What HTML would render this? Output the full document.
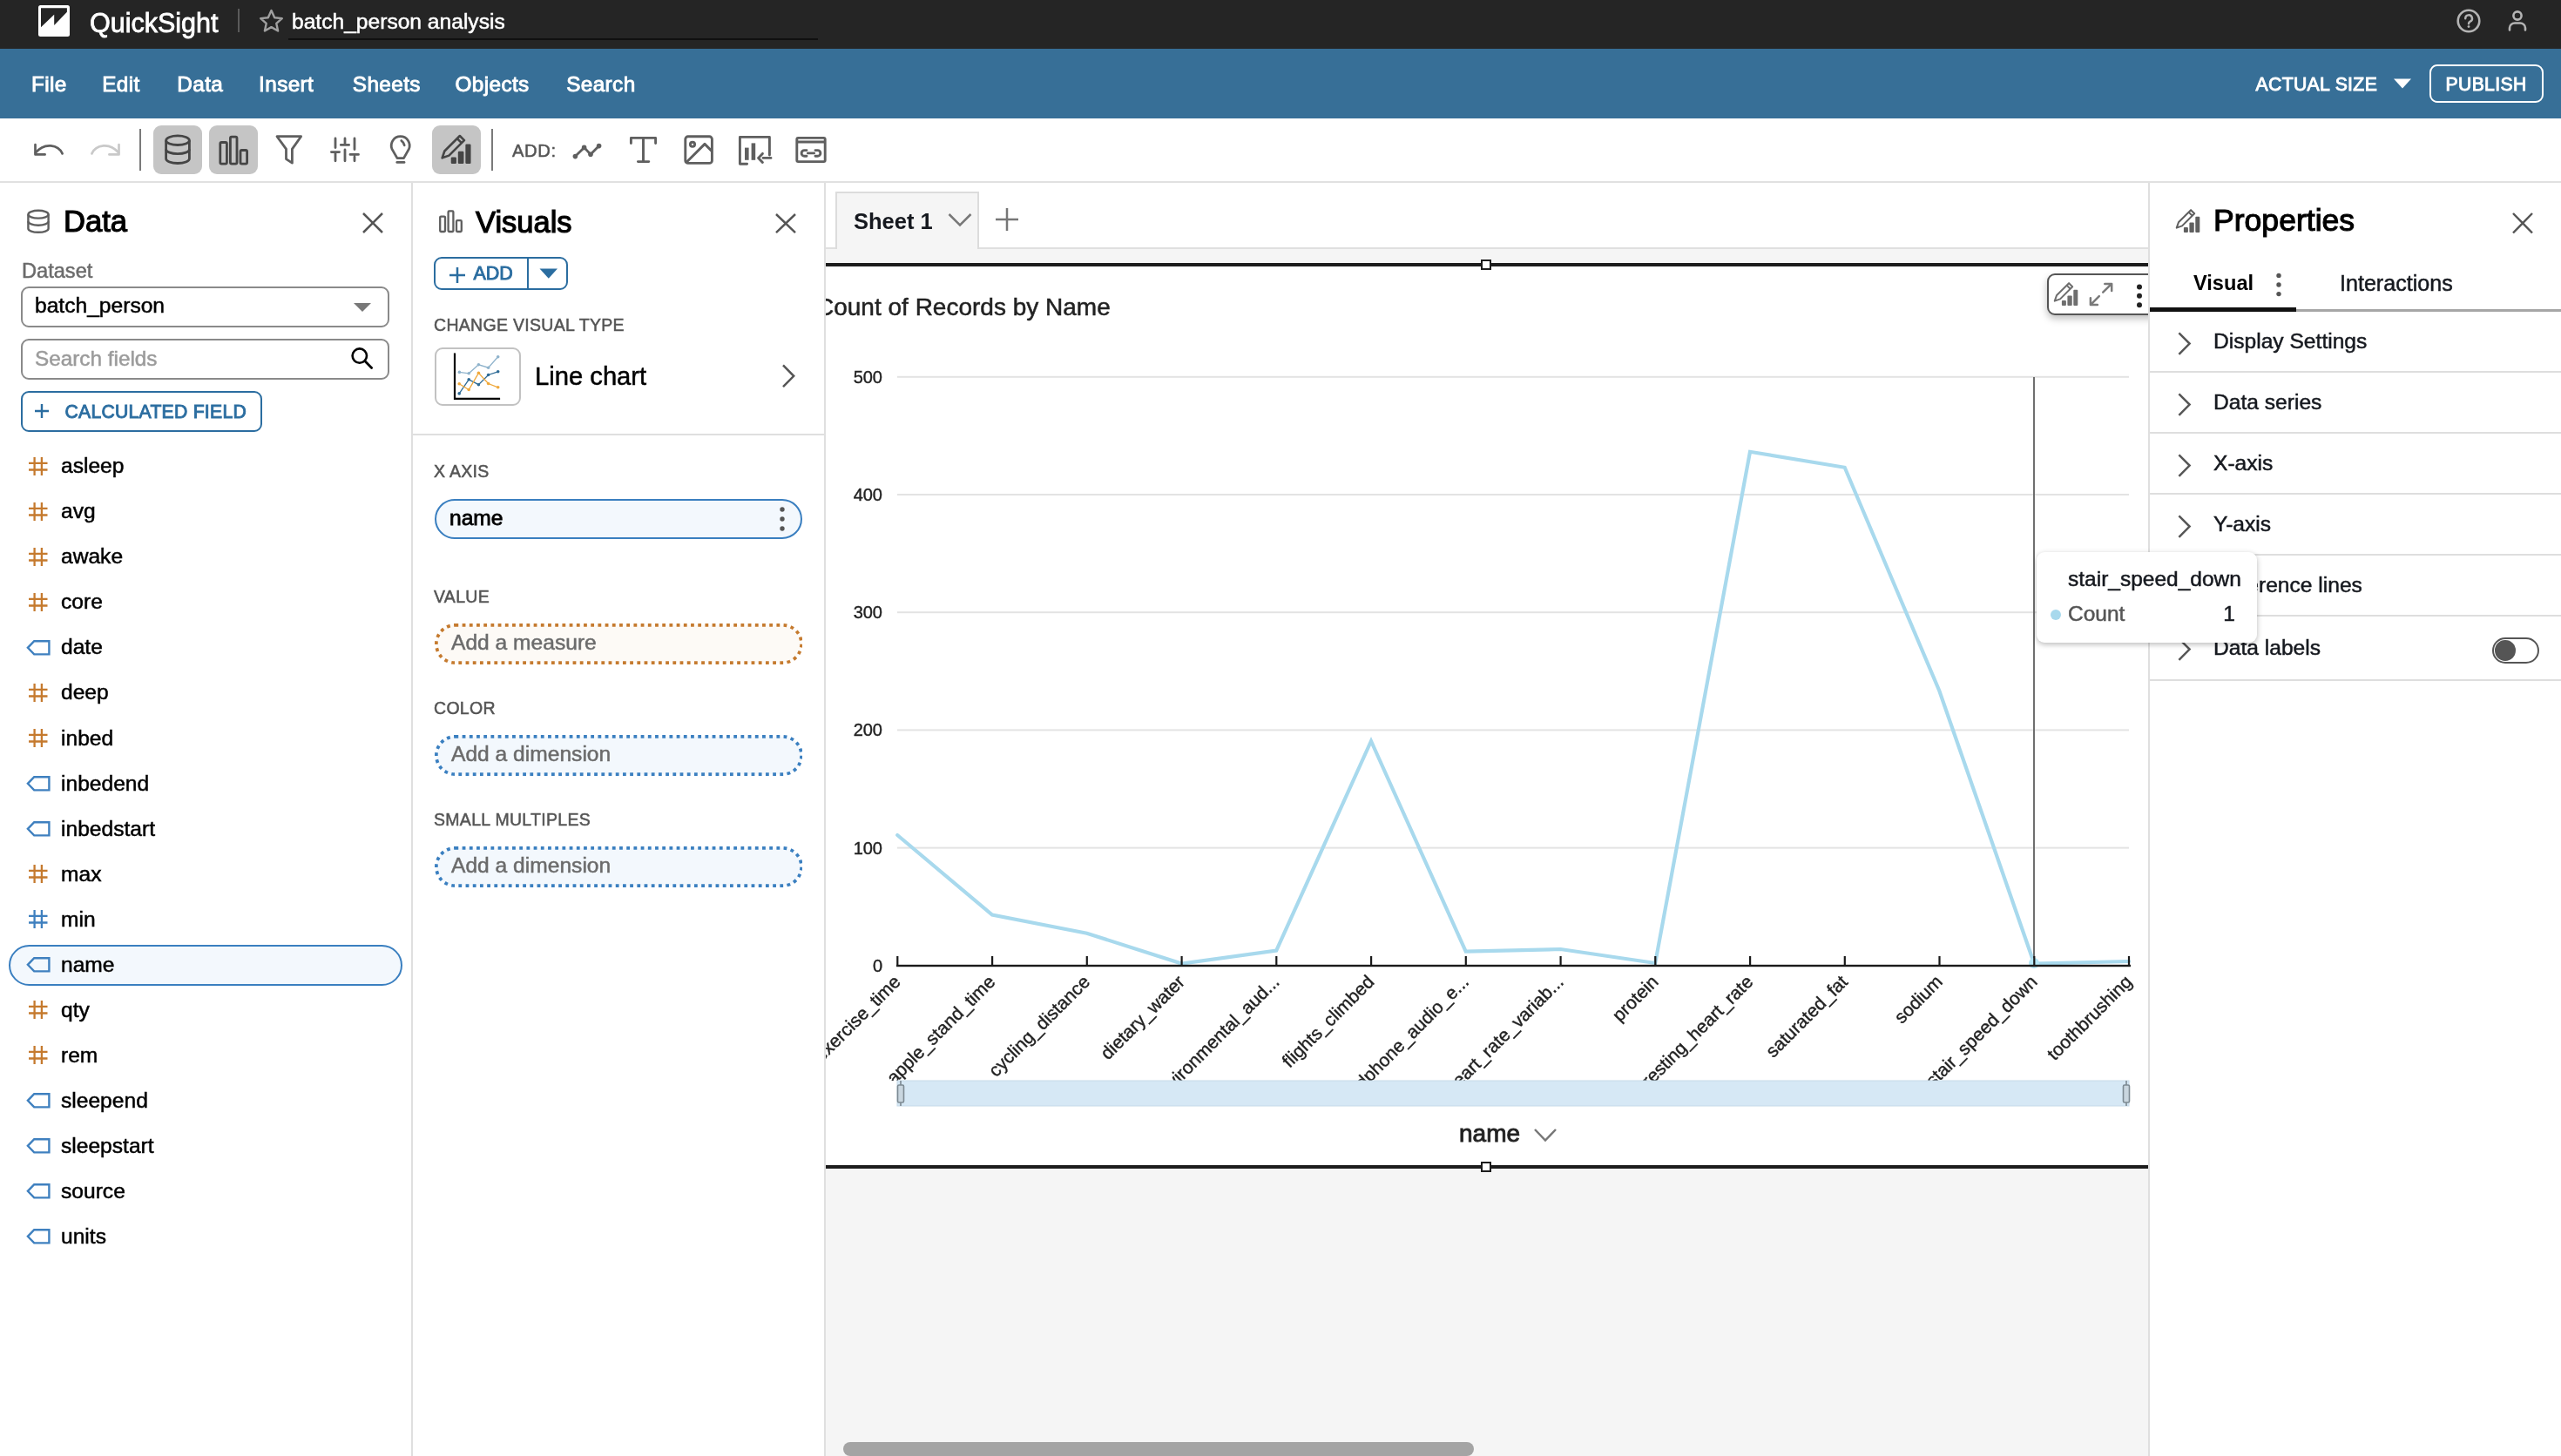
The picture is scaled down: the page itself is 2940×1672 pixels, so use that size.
<!DOCTYPE html>
<html><head><meta charset="utf-8"><title>QuickSight</title>
<style>
html,body{margin:0;padding:0;width:2940px;height:1672px;overflow:hidden;background:#fff;}
body{position:relative;font-family:"Liberation Sans",sans-serif;}
.t{position:absolute;white-space:nowrap;-webkit-text-stroke:0.5px currentColor;}
.t.b{-webkit-text-stroke:0;}
body{will-change:transform;}
.r{position:absolute;display:block;}
</style></head><body>
<div class="r" style="left:0.0px;top:0.0px;width:2940.0px;height:56.0px;background:#252525"></div>
<svg class="r" style="left:44px;top:6px;" width="36" height="36" viewBox="0 0 36 36"><rect x="0" y="0" width="36" height="36" rx="2.5" fill="#fff"/><path d="M3 3.2 H32.9 V7.7 L18.2 22.9 V10.8 L3 25.2 Z" fill="#252525"/></svg>
<div class="t" style="left:103.0px;top:10.9px;font-size:30.5px;line-height:30.5px;font-weight:400;color:#ffffff;-webkit-text-stroke:0.8px #fff">QuickSight</div>
<div class="r" style="left:273.0px;top:10.0px;width:2.0px;height:27.0px;background:#5a5a5a"></div>
<svg class="r" style="left:296px;top:9px;" width="32" height="30" viewBox="0 0 32 30"><path d="M15.5 3 L19.2 11.2 L27.8 12.1 L21.3 17.9 L23.1 26.5 L15.5 22.1 L7.9 26.5 L9.7 17.9 L3.2 12.1 L11.8 11.2 Z" fill="none" stroke="#a0a0a0" stroke-width="2.4" stroke-linejoin="round"/></svg>
<div class="t" style="left:335.0px;top:13.2px;font-size:24.6px;line-height:24.6px;font-weight:400;color:#ffffff;">batch_person analysis</div>
<div class="r" style="left:331.0px;top:44.0px;width:608.0px;height:2.0px;background:#101010"></div>
<svg class="r" style="left:2818px;top:8px;" width="32" height="32" viewBox="0 0 32 32"><circle cx="16" cy="16" r="12.3" fill="none" stroke="#b4b4b4" stroke-width="2.6"/><path d="M12.2 13.2 a3.9 3.9 0 1 1 5.6 3.5 c-1.2 .6 -1.8 1.3 -1.8 2.6" fill="none" stroke="#b4b4b4" stroke-width="2.4" stroke-linecap="round"/><circle cx="16" cy="22.6" r="1.4" fill="#b4b4b4"/></svg>
<svg class="r" style="left:2876px;top:10px;" width="28" height="28" viewBox="0 0 28 28"><circle cx="14" cy="8" r="4.6" fill="none" stroke="#b4b4b4" stroke-width="2.6"/><path d="M5 24.5 V22 a6 5.5 0 0 1 6 -5.5 H17 a6 5.5 0 0 1 6 5.5 V24.5" fill="none" stroke="#b4b4b4" stroke-width="2.6" stroke-linecap="round"/></svg>
<div class="r" style="left:0.0px;top:56.0px;width:2940.0px;height:80.0px;background:#376f97"></div>
<div class="t" style="left:36.0px;top:84.7px;font-size:24.3px;line-height:24.3px;font-weight:400;color:#ffffff;letter-spacing:0.4px;-webkit-text-stroke:0.9px #fff">File</div>
<div class="t" style="left:117.2px;top:84.7px;font-size:24.3px;line-height:24.3px;font-weight:400;color:#ffffff;letter-spacing:0.4px;-webkit-text-stroke:0.9px #fff">Edit</div>
<div class="t" style="left:203.3px;top:84.7px;font-size:24.3px;line-height:24.3px;font-weight:400;color:#ffffff;letter-spacing:0.4px;-webkit-text-stroke:0.9px #fff">Data</div>
<div class="t" style="left:297.1px;top:84.7px;font-size:24.3px;line-height:24.3px;font-weight:400;color:#ffffff;letter-spacing:0.4px;-webkit-text-stroke:0.9px #fff">Insert</div>
<div class="t" style="left:404.8px;top:84.7px;font-size:24.3px;line-height:24.3px;font-weight:400;color:#ffffff;letter-spacing:0.4px;-webkit-text-stroke:0.9px #fff">Sheets</div>
<div class="t" style="left:522.5px;top:84.7px;font-size:24.3px;line-height:24.3px;font-weight:400;color:#ffffff;letter-spacing:0.4px;-webkit-text-stroke:0.9px #fff">Objects</div>
<div class="t" style="left:650.2px;top:84.7px;font-size:24.3px;line-height:24.3px;font-weight:400;color:#ffffff;letter-spacing:0.4px;-webkit-text-stroke:0.9px #fff">Search</div>
<div class="t" style="left:2589.5px;top:86.0px;font-size:21.2px;line-height:21.2px;font-weight:400;color:#ffffff;letter-spacing:0.35px;-webkit-text-stroke:0.9px #fff">ACTUAL SIZE</div>
<svg class="r" style="left:2746px;top:89px;" width="24" height="14" viewBox="0 0 24 14"><path d="M2 1.5 H22 L12 12.5 Z" fill="#fff"/></svg>
<div class="r" style="left:2789.0px;top:74.0px;width:131.0px;height:43.5px;border:2.4px solid #fff;border-radius:9px;box-sizing:border-box"></div>
<div class="t" style="left:2807.5px;top:86.0px;font-size:21.2px;line-height:21.2px;font-weight:400;color:#ffffff;letter-spacing:0.35px;-webkit-text-stroke:0.9px #fff">PUBLISH</div>
<div class="r" style="left:0.0px;top:136.0px;width:2940.0px;height:72.0px;background:#fff"></div>
<div class="r" style="left:0.0px;top:208.0px;width:2940.0px;height:2.0px;background:#e1e1e1"></div>
<svg class="r" style="left:34px;top:158px;" width="44" height="26" viewBox="0 0 44 26"><path d="M37.6 18.4 C33 8 17 5 6.8 17.5" fill="none" stroke="#5f5f5f" stroke-width="2.7" stroke-linecap="round"/><path d="M6.5 8.2 V19.4 H17.6" fill="none" stroke="#5f5f5f" stroke-width="2.7" stroke-linecap="round" stroke-linejoin="round"/></svg>
<svg class="r" style="left:99px;top:158px;" width="44" height="26" viewBox="0 0 44 26"><path d="M6.4 18.4 C11 8 27 5 37.2 17.5" fill="none" stroke="#c9c9c9" stroke-width="2.7" stroke-linecap="round"/><path d="M37.5 8.2 V19.4 H26.4" fill="none" stroke="#c9c9c9" stroke-width="2.7" stroke-linecap="round" stroke-linejoin="round"/></svg>
<div class="r" style="left:160.0px;top:148.0px;width:2.0px;height:48.0px;background:#7a7a7a"></div>
<div class="r" style="left:176.0px;top:144.0px;width:56.0px;height:56.0px;background:#c5c5c5;border-radius:9px"></div>
<div class="r" style="left:240.0px;top:144.0px;width:56.0px;height:56.0px;background:#c5c5c5;border-radius:9px"></div>
<div class="r" style="left:496.0px;top:144.0px;width:56.0px;height:56.0px;background:#c5c5c5;border-radius:9px"></div>
<svg class="r" style="left:176px;top:144px;" width="56" height="56" viewBox="0 0 56 56"><g fill="none" stroke="#454545" stroke-width="2.8"><ellipse cx="28" cy="17.2" rx="13.4" ry="5.3"/><path d="M14.6 17.2 V38.2 a13.4 5.3 0 0 0 26.8 0 V17.2"/><path d="M14.6 27.4 a13.4 5.3 0 0 0 26.8 0"/></g></svg>
<svg class="r" style="left:240px;top:144px;" width="56" height="56" viewBox="0 0 56 56"><g fill="none" stroke="#454545" stroke-width="2.8" stroke-linejoin="round"><rect x="12.8" y="19.5" width="7.6" height="24.6" rx="1.5"/><rect x="24.4" y="13.2" width="7.6" height="30.9" rx="1.5"/><rect x="36" y="28.5" width="7.6" height="15.6" rx="1.5"/></g></svg>
<svg class="r" style="left:296px;top:144px;" width="72" height="56" viewBox="0 0 72 56"><path d="M22 12.7 H49.6 L39.4 27.1 V43.2 L32.5 38.6 V27.1 Z" fill="none" stroke="#5f5f5f" stroke-width="2.8" stroke-linejoin="round"/></svg>
<svg class="r" style="left:368px;top:144px;" width="56" height="56" viewBox="0 0 56 56"><g stroke="#5f5f5f" stroke-width="2.8" stroke-linecap="round"><path d="M17 15 V25.5 M17 30.6 V40.8 M12.4 30.6 H21.6"/><path d="M28 15 V20.6 M28 28 V40.8 M23.3 22.4 H32.6"/><path d="M39 15 V27.5 M39 36 V40.8 M34 33.4 H43.5"/></g></svg>
<svg class="r" style="left:432px;top:144px;" width="56" height="56" viewBox="0 0 56 56"><g fill="none" stroke="#5f5f5f" stroke-width="2.8" stroke-linecap="round" stroke-linejoin="round"><path d="M24 37.6 L18.1 27.4 A10.5 10.5 0 1 1 37.3 27.4 L31.5 37.6 Z"/><path d="M23.8 42.4 H32"/><path d="M28.8 17.6 Q31.4 19.4 32.2 22.8"/></g></svg>
<svg class="r" style="left:496px;top:144px;" width="56" height="56" viewBox="0 0 56 56"><g transform="translate(5.74,5.6) scale(1.24)"><g fill="#454545"><rect x="12.9" y="25" width="5" height="6" rx="1"/><rect x="19.4" y="19.4" width="5.35" height="11.6" rx="1"/><rect x="26.3" y="12.8" width="5" height="18.2" rx="1"/></g><path d="M4.75 25.6 L6.94 19.31 L21.08 5.17 L25.18 9.27 L11.04 23.41 Z M18.61 7.64 L22.71 11.74" fill="none" stroke="#454545" stroke-width="2.1" stroke-linejoin="round"/></g></svg>
<div class="r" style="left:564.0px;top:148.0px;width:2.0px;height:48.0px;background:#7a7a7a"></div>
<div class="t" style="left:588.0px;top:162.9px;font-size:20.2px;line-height:20.2px;font-weight:400;color:#555555;letter-spacing:0.6px">ADD:</div>
<svg class="r" style="left:650px;top:150px;" width="48" height="40" viewBox="0 0 48 40"><path d="M10.4 29.6 L20.6 19.4 L28 27.2 L37.6 17.6" fill="none" stroke="#5f5f5f" stroke-width="2.8" stroke-linecap="round" stroke-linejoin="round"/><g fill="#5f5f5f"><circle cx="10.4" cy="29.6" r="2.8"/><circle cx="20.6" cy="19.4" r="2.8"/><circle cx="28" cy="27.2" r="2.8"/><circle cx="37.6" cy="17.6" r="2.8"/></g></svg>
<svg class="r" style="left:712px;top:150px;" width="52" height="44" viewBox="0 0 52 44"><path d="M12.4 14.6 V8.4 H40.6 V14.6 M26.5 8.4 V35.6 M20.4 35.6 H32.8" fill="none" stroke="#5f5f5f" stroke-width="2.9" stroke-linecap="round" stroke-linejoin="round"/></svg>
<svg class="r" style="left:776px;top:148px;" width="52" height="48" viewBox="0 0 52 48"><g fill="none" stroke="#5f5f5f" stroke-width="2.9" stroke-linejoin="round"><rect x="10.8" y="8.8" width="30.6" height="30.6" rx="3"/><circle cx="19" cy="17.8" r="2.6"/><path d="M11.6 38.8 L33 17.4 L41 25.4"/></g></svg>
<svg class="r" style="left:840px;top:148px;" width="54" height="48" viewBox="0 0 54 48"><g fill="none" stroke="#5f5f5f" stroke-width="2.9" stroke-linecap="round" stroke-linejoin="round"><path d="M9.4 29 V40.3 H17.6 M9.4 30 V9.4 H43.4 V30"/><path d="M36 33.4 H45 M30.6 33.4 L35.4 28.4 M30.6 33.4 L35.4 38.4"/></g><g fill="#5f5f5f"><rect x="15" y="21.6" width="4.6" height="14.2"/><rect x="22.6" y="16.4" width="4.6" height="19.4"/></g></svg>
<svg class="r" style="left:904px;top:148px;" width="54" height="48" viewBox="0 0 54 48"><g fill="none" stroke="#5f5f5f" stroke-width="2.9" stroke-linejoin="round"><rect x="10.8" y="10.4" width="32.4" height="27.2" rx="1.5"/><path d="M10.8 15 H43.2"/><path d="M22 24.6 h-2.6 a3.3 3.3 0 0 0 0 6.6 h2.6 M32 24.6 h2.6 a3.3 3.3 0 0 1 0 6.6 h-2.6 M23.4 27.9 H30.6" stroke-linecap="round"/></g></svg>
<div class="r" style="left:0.0px;top:210.0px;width:472.0px;height:1462.0px;background:#fff"></div>
<div class="r" style="left:472.0px;top:210.0px;width:2.0px;height:1462.0px;background:#dfdfdf"></div>
<svg class="r" style="left:28px;top:238px;" width="32" height="32" viewBox="0 0 32 32"><g fill="none" stroke="#5f5f5f" stroke-width="2.4"><ellipse cx="16" cy="8.2" rx="11.6" ry="4.4"/><path d="M4.4 8.2 V24.4 a11.6 4.4 0 0 0 23.2 0 V8.2"/><path d="M4.4 16.3 a11.6 4.4 0 0 0 23.2 0"/></g></svg>
<div class="t" style="left:73.0px;top:237.1px;font-size:34.6px;line-height:34.6px;font-weight:400;color:#000000;-webkit-text-stroke:1.2px #000">Data</div>
<svg class="r" style="left:415px;top:243px;" width="26" height="26" viewBox="0 0 26 26"><path d="M2 2 L24 24 M24 2 L2 24" stroke="#555" stroke-width="2.5" stroke-linecap="butt"/></svg>
<div class="t" style="left:25.0px;top:300.0px;font-size:23.6px;line-height:23.6px;font-weight:400;color:#6b6b6b;">Dataset</div>
<div class="r" style="left:24.0px;top:328.5px;width:423.0px;height:47.0px;border:2.4px solid #8a8a8a;border-radius:9px;box-sizing:border-box;background:#fff"></div>
<div class="t" style="left:40.0px;top:339.2px;font-size:24.6px;line-height:24.6px;font-weight:400;color:#000000;">batch_person</div>
<svg class="r" style="left:404px;top:346px;" width="24" height="14" viewBox="0 0 24 14"><path d="M2 2 H22 L12 12 Z" fill="#787878"/></svg>
<div class="r" style="left:24.0px;top:388.5px;width:423.0px;height:47.0px;border:2.4px solid #8a8a8a;border-radius:9px;box-sizing:border-box;background:#fff"></div>
<div class="t" style="left:40.0px;top:400.4px;font-size:24.3px;line-height:24.3px;font-weight:400;color:#9b9b9b;">Search fields</div>
<svg class="r" style="left:400px;top:396px;" width="32" height="32" viewBox="0 0 32 32"><circle cx="12.8" cy="12.6" r="8.2" fill="none" stroke="#000" stroke-width="2.6"/><path d="M18.8 18.6 L26.6 26.4" stroke="#000" stroke-width="2.8" stroke-linecap="round"/></svg>
<div class="r" style="left:24.0px;top:448.5px;width:277.0px;height:47.0px;border:2.4px solid #2b6da0;border-radius:9px;box-sizing:border-box"></div>
<svg class="r" style="left:38px;top:462px;" width="20" height="20" viewBox="0 0 20 20"><path d="M10 2 V18 M2 10 H18" stroke="#2b6da0" stroke-width="2.4"/></svg>
<div class="t" style="left:74.5px;top:462.4px;font-size:21.2px;line-height:21.2px;font-weight:400;color:#2b6da0;letter-spacing:0.25px;-webkit-text-stroke:0.9px #2b6da0">CALCULATED FIELD</div>
<svg class="r" style="left:30px;top:520px;" width="28" height="28" viewBox="0 0 28 28"><path d="M9.6 5 V26 M17.9 5 V26 M3 11.8 H24.5 M3 19.5 H24.5" stroke="#c57a2e" stroke-width="2.3"/></svg>
<div class="t" style="left:70.0px;top:523.2px;font-size:24.6px;line-height:24.6px;font-weight:400;color:#000000;">asleep</div>
<svg class="r" style="left:30px;top:572px;" width="28" height="28" viewBox="0 0 28 28"><path d="M9.6 5 V26 M17.9 5 V26 M3 11.8 H24.5 M3 19.5 H24.5" stroke="#c57a2e" stroke-width="2.3"/></svg>
<div class="t" style="left:70.0px;top:575.2px;font-size:24.6px;line-height:24.6px;font-weight:400;color:#000000;">avg</div>
<svg class="r" style="left:30px;top:624px;" width="28" height="28" viewBox="0 0 28 28"><path d="M9.6 5 V26 M17.9 5 V26 M3 11.8 H24.5 M3 19.5 H24.5" stroke="#c57a2e" stroke-width="2.3"/></svg>
<div class="t" style="left:70.0px;top:627.3px;font-size:24.6px;line-height:24.6px;font-weight:400;color:#000000;">awake</div>
<svg class="r" style="left:30px;top:676px;" width="28" height="28" viewBox="0 0 28 28"><path d="M9.6 5 V26 M17.9 5 V26 M3 11.8 H24.5 M3 19.5 H24.5" stroke="#c57a2e" stroke-width="2.3"/></svg>
<div class="t" style="left:70.0px;top:679.3px;font-size:24.6px;line-height:24.6px;font-weight:400;color:#000000;">core</div>
<svg class="r" style="left:28px;top:728px;" width="32" height="28" viewBox="0 0 32 28"><path d="M28.4 8.2 H11.2 L3.9 15.8 L11.2 23.4 H28.4 Z" fill="none" stroke="#3f80bf" stroke-width="2.4" stroke-linejoin="miter"/></svg>
<div class="t" style="left:70.0px;top:731.4px;font-size:24.6px;line-height:24.6px;font-weight:400;color:#000000;">date</div>
<svg class="r" style="left:30px;top:780px;" width="28" height="28" viewBox="0 0 28 28"><path d="M9.6 5 V26 M17.9 5 V26 M3 11.8 H24.5 M3 19.5 H24.5" stroke="#c57a2e" stroke-width="2.3"/></svg>
<div class="t" style="left:70.0px;top:783.4px;font-size:24.6px;line-height:24.6px;font-weight:400;color:#000000;">deep</div>
<svg class="r" style="left:30px;top:832px;" width="28" height="28" viewBox="0 0 28 28"><path d="M9.6 5 V26 M17.9 5 V26 M3 11.8 H24.5 M3 19.5 H24.5" stroke="#c57a2e" stroke-width="2.3"/></svg>
<div class="t" style="left:70.0px;top:835.5px;font-size:24.6px;line-height:24.6px;font-weight:400;color:#000000;">inbed</div>
<svg class="r" style="left:28px;top:884px;" width="32" height="28" viewBox="0 0 32 28"><path d="M28.4 8.2 H11.2 L3.9 15.8 L11.2 23.4 H28.4 Z" fill="none" stroke="#3f80bf" stroke-width="2.4" stroke-linejoin="miter"/></svg>
<div class="t" style="left:70.0px;top:887.5px;font-size:24.6px;line-height:24.6px;font-weight:400;color:#000000;">inbedend</div>
<svg class="r" style="left:28px;top:936px;" width="32" height="28" viewBox="0 0 32 28"><path d="M28.4 8.2 H11.2 L3.9 15.8 L11.2 23.4 H28.4 Z" fill="none" stroke="#3f80bf" stroke-width="2.4" stroke-linejoin="miter"/></svg>
<div class="t" style="left:70.0px;top:939.6px;font-size:24.6px;line-height:24.6px;font-weight:400;color:#000000;">inbedstart</div>
<svg class="r" style="left:30px;top:988px;" width="28" height="28" viewBox="0 0 28 28"><path d="M9.6 5 V26 M17.9 5 V26 M3 11.8 H24.5 M3 19.5 H24.5" stroke="#c57a2e" stroke-width="2.3"/></svg>
<div class="t" style="left:70.0px;top:991.6px;font-size:24.6px;line-height:24.6px;font-weight:400;color:#000000;">max</div>
<svg class="r" style="left:30px;top:1040px;" width="28" height="28" viewBox="0 0 28 28"><path d="M9.6 5 V26 M17.9 5 V26 M3 11.8 H24.5 M3 19.5 H24.5" stroke="#3f80bf" stroke-width="2.3"/></svg>
<div class="t" style="left:70.0px;top:1043.7px;font-size:24.6px;line-height:24.6px;font-weight:400;color:#000000;">min</div>
<div class="r" style="left:10.0px;top:1084.5px;width:452.0px;height:47.0px;border:2.4px solid #3a7fc0;border-radius:24px;box-sizing:border-box;background:#f3f8fd"></div>
<svg class="r" style="left:28px;top:1092px;" width="32" height="28" viewBox="0 0 32 28"><path d="M28.4 8.2 H11.2 L3.9 15.8 L11.2 23.4 H28.4 Z" fill="none" stroke="#3f80bf" stroke-width="2.4" stroke-linejoin="miter"/></svg>
<div class="t" style="left:70.0px;top:1095.7px;font-size:24.6px;line-height:24.6px;font-weight:400;color:#000000;">name</div>
<svg class="r" style="left:30px;top:1144px;" width="28" height="28" viewBox="0 0 28 28"><path d="M9.6 5 V26 M17.9 5 V26 M3 11.8 H24.5 M3 19.5 H24.5" stroke="#c57a2e" stroke-width="2.3"/></svg>
<div class="t" style="left:70.0px;top:1147.8px;font-size:24.6px;line-height:24.6px;font-weight:400;color:#000000;">qty</div>
<svg class="r" style="left:30px;top:1196px;" width="28" height="28" viewBox="0 0 28 28"><path d="M9.6 5 V26 M17.9 5 V26 M3 11.8 H24.5 M3 19.5 H24.5" stroke="#c57a2e" stroke-width="2.3"/></svg>
<div class="t" style="left:70.0px;top:1199.8px;font-size:24.6px;line-height:24.6px;font-weight:400;color:#000000;">rem</div>
<svg class="r" style="left:28px;top:1248px;" width="32" height="28" viewBox="0 0 32 28"><path d="M28.4 8.2 H11.2 L3.9 15.8 L11.2 23.4 H28.4 Z" fill="none" stroke="#3f80bf" stroke-width="2.4" stroke-linejoin="miter"/></svg>
<div class="t" style="left:70.0px;top:1251.9px;font-size:24.6px;line-height:24.6px;font-weight:400;color:#000000;">sleepend</div>
<svg class="r" style="left:28px;top:1300px;" width="32" height="28" viewBox="0 0 32 28"><path d="M28.4 8.2 H11.2 L3.9 15.8 L11.2 23.4 H28.4 Z" fill="none" stroke="#3f80bf" stroke-width="2.4" stroke-linejoin="miter"/></svg>
<div class="t" style="left:70.0px;top:1303.9px;font-size:24.6px;line-height:24.6px;font-weight:400;color:#000000;">sleepstart</div>
<svg class="r" style="left:28px;top:1352px;" width="32" height="28" viewBox="0 0 32 28"><path d="M28.4 8.2 H11.2 L3.9 15.8 L11.2 23.4 H28.4 Z" fill="none" stroke="#3f80bf" stroke-width="2.4" stroke-linejoin="miter"/></svg>
<div class="t" style="left:70.0px;top:1356.0px;font-size:24.6px;line-height:24.6px;font-weight:400;color:#000000;">source</div>
<svg class="r" style="left:28px;top:1404px;" width="32" height="28" viewBox="0 0 32 28"><path d="M28.4 8.2 H11.2 L3.9 15.8 L11.2 23.4 H28.4 Z" fill="none" stroke="#3f80bf" stroke-width="2.4" stroke-linejoin="miter"/></svg>
<div class="t" style="left:70.0px;top:1408.0px;font-size:24.6px;line-height:24.6px;font-weight:400;color:#000000;">units</div>
<div class="r" style="left:474.0px;top:210.0px;width:472.0px;height:1462.0px;background:#fff"></div>
<div class="r" style="left:946.0px;top:210.0px;width:2.0px;height:1462.0px;background:#dfdfdf"></div>
<svg class="r" style="left:500px;top:236px;" width="36" height="36" viewBox="0 0 36 36"><g fill="none" stroke="#5f5f5f" stroke-width="2.3"><rect x="5.2" y="12.6" width="5.8" height="17.4" rx="1"/><rect x="14.6" y="6.4" width="5.8" height="23.6" rx="1"/><rect x="24" y="17.2" width="5.8" height="12.8" rx="1"/></g></svg>
<div class="t" style="left:546.0px;top:237.8px;font-size:34.5px;line-height:34.5px;font-weight:400;color:#000000;-webkit-text-stroke:1.2px #000">Visuals</div>
<svg class="r" style="left:889px;top:243.6px;" width="26" height="25" viewBox="0 0 26 25"><path d="M2 2 L24 23.099999999999994 M24 2 L2 23.099999999999994" stroke="#555" stroke-width="2.5" stroke-linecap="butt"/></svg>
<div class="r" style="left:498.4px;top:294.8px;width:153.9px;height:38.7px;border:2.4px solid #2b6da0;border-radius:9px;box-sizing:border-box"></div>
<div class="r" style="left:604.6px;top:294.8px;width:2.4px;height:38.7px;background:#2b6da0"></div>
<svg class="r" style="left:514px;top:305px;" width="22" height="22" viewBox="0 0 22 22"><path d="M11 2 V20 M2 11 H20" stroke="#2b6da0" stroke-width="2.5"/></svg>
<div class="t" style="left:543.5px;top:303.8px;font-size:21.5px;line-height:21.5px;font-weight:400;color:#2b6da0;-webkit-text-stroke:0.9px #2b6da0">ADD</div>
<svg class="r" style="left:617px;top:306px;" width="26" height="16" viewBox="0 0 26 16"><path d="M2.5 2.4 H23 L12.8 13.8 Z" fill="#2b6da0"/></svg>
<div class="t" style="left:498.0px;top:363.8px;font-size:19.5px;line-height:19.5px;font-weight:400;color:#555555;letter-spacing:0.3px">CHANGE VISUAL TYPE</div>
<div class="r" style="left:498.5px;top:398.5px;width:99.1px;height:67.0px;border:2.4px solid #c2c2c2;border-radius:9px;box-sizing:border-box;background:#fff"></div>
<svg class="r" style="left:496px;top:396px;" width="104" height="72" viewBox="0 0 104 72"><path d="M26 9.6 V61.8 H78.1" fill="none" stroke="#000" stroke-width="2.2"/>
<g fill="none" stroke-width="1.3"><polyline points="31.4,31.4 42.2,32.8 53.4,22.8 64.6,26.2 75.7,13.8" stroke="#8fb3cc"/><polyline points="31.2,55.9 42.2,39.8 53.4,45.7 64.6,34.5 75.7,30.8" stroke="#2e6b96"/><polyline points="31.2,44.8 42.2,51.5 53.4,32.3 64.6,44.5 75.7,48.8" stroke="#f0a93c"/></g>
<g fill="#8fb3cc"><circle cx="31.4" cy="31.4" r="1.8"/><circle cx="42.2" cy="32.8" r="1.8"/><circle cx="53.4" cy="22.8" r="1.8"/><circle cx="64.6" cy="26.2" r="1.8"/><circle cx="75.7" cy="13.8" r="1.8"/></g>
<g fill="#2e6b96"><circle cx="31.2" cy="55.9" r="1.8"/><circle cx="42.2" cy="39.8" r="1.8"/><circle cx="53.4" cy="45.7" r="1.8"/><circle cx="64.6" cy="34.5" r="1.8"/><circle cx="75.7" cy="30.8" r="1.8"/></g>
<g fill="#f0a93c"><circle cx="31.2" cy="44.8" r="1.8"/><circle cx="42.2" cy="51.5" r="1.8"/><circle cx="53.4" cy="32.3" r="1.8"/><circle cx="64.6" cy="44.5" r="1.8"/><circle cx="75.7" cy="48.8" r="1.8"/></g></svg>
<div class="t" style="left:614.0px;top:417.7px;font-size:29.2px;line-height:29.2px;font-weight:400;color:#000000;">Line chart</div>
<svg class="r" style="left:894px;top:416px;" width="24" height="32" viewBox="0 0 24 32"><path d="M5 3.4 L17.2 15.8 L5 28.2" fill="none" stroke="#555" stroke-width="2.5"/></svg>
<div class="r" style="left:474.0px;top:498.0px;width:472.0px;height:2.0px;background:#dfdfdf"></div>
<div class="t" style="left:498.0px;top:531.5px;font-size:19.5px;line-height:19.5px;font-weight:400;color:#555555;letter-spacing:0.3px">X AXIS</div>
<div class="r" style="left:498.5px;top:572.7px;width:422.9px;height:46.7px;border:2.4px solid #3a7fc0;border-radius:24px;box-sizing:border-box;background:#f3f8fd"></div>
<div class="t" style="left:516.0px;top:583.2px;font-size:24.6px;line-height:24.6px;font-weight:400;color:#000000;-webkit-text-stroke:0.8px #000">name</div>
<svg class="r" style="left:890px;top:578px;" width="16" height="36" viewBox="0 0 16 36"><g fill="#555"><circle cx="8" cy="7" r="2.7"/><circle cx="8" cy="18" r="2.7"/><circle cx="8" cy="29" r="2.7"/></g></svg>
<div class="t" style="left:498.0px;top:675.5px;font-size:19.5px;line-height:19.5px;font-weight:400;color:#555555;letter-spacing:0.3px">VALUE</div>
<svg class="r" style="left:498.5px;top:716px;" width="422.9" height="47" viewBox="0 0 422.9 47"><rect x="1.85" y="1.85" width="419.2" height="43.3" rx="21.6" fill="#fdfaf6" stroke="#c57a2e" stroke-width="3.7" stroke-dasharray="3.8 4.4"/></svg>
<div class="t" style="left:518.0px;top:725.9px;font-size:24.6px;line-height:24.6px;font-weight:400;color:#6b6b6b;">Add a measure</div>
<div class="t" style="left:498.0px;top:804.0px;font-size:19.5px;line-height:19.5px;font-weight:400;color:#555555;letter-spacing:0.3px">COLOR</div>
<svg class="r" style="left:498.5px;top:844px;" width="422.9" height="47" viewBox="0 0 422.9 47"><rect x="1.85" y="1.85" width="419.2" height="43.3" rx="21.6" fill="#f3f8fd" stroke="#3a7fc0" stroke-width="3.7" stroke-dasharray="3.8 4.4"/></svg>
<div class="t" style="left:518.0px;top:853.8px;font-size:24.6px;line-height:24.6px;font-weight:400;color:#6b6b6b;">Add a dimension</div>
<div class="t" style="left:498.0px;top:931.5px;font-size:19.5px;line-height:19.5px;font-weight:400;color:#555555;letter-spacing:0.3px">SMALL MULTIPLES</div>
<svg class="r" style="left:498.5px;top:972px;" width="422.9" height="47" viewBox="0 0 422.9 47"><rect x="1.85" y="1.85" width="419.2" height="43.3" rx="21.6" fill="#f3f8fd" stroke="#3a7fc0" stroke-width="3.7" stroke-dasharray="3.8 4.4"/></svg>
<div class="t" style="left:518.0px;top:981.8px;font-size:24.6px;line-height:24.6px;font-weight:400;color:#6b6b6b;">Add a dimension</div>
<div class="r" style="left:948.0px;top:210.0px;width:1518.0px;height:1462.0px;background:#f5f5f5"></div>
<div class="r" style="left:948.0px;top:210.0px;width:1518.0px;height:74.0px;background:#fff"></div>
<div class="r" style="left:948.0px;top:284.0px;width:1518.0px;height:2.0px;background:#dfdfdf"></div>
<div class="r" style="left:959.0px;top:220.0px;width:165.0px;height:66.0px;background:#f5f5f5;border:2px solid #dcdcdc;border-bottom:none;box-sizing:border-box"></div>
<div class="t b" style="left:980.0px;top:242.4px;font-size:25.5px;line-height:25.5px;font-weight:700;color:#16191f;">Sheet 1</div>
<svg class="r" style="left:1086px;top:242px;" width="32" height="22" viewBox="0 0 32 22"><path d="M3.5 4 L16 16.5 L28.5 4" fill="none" stroke="#777" stroke-width="2.5"/></svg>
<svg class="r" style="left:1140px;top:236px;" width="32" height="32" viewBox="0 0 32 32"><path d="M16 3 V29 M3 16 H29" stroke="#777" stroke-width="2.5"/></svg>
<div class="r" style="left:948.0px;top:302.0px;width:1518.0px;height:1040.0px;background:#fff"></div>
<div class="r" style="left:948.0px;top:302.0px;width:1518.0px;height:4.0px;background:#1c1c1c"></div>
<div class="r" style="left:948.0px;top:1338.0px;width:1518.0px;height:4.0px;background:#1c1c1c"></div>
<div class="r" style="left:1700.0px;top:298.0px;width:12.0px;height:12.0px;background:#fff;border:2px solid #1c1c1c;box-sizing:border-box"></div>
<div class="r" style="left:1700.0px;top:1334.0px;width:12.0px;height:12.0px;background:#fff;border:2px solid #1c1c1c;box-sizing:border-box"></div>
<svg class="r" style="left:948px;top:0px;font-family:'Liberation Sans',sans-serif" width="1518" height="1672" viewBox="0 0 1518 1672"><text x="-11.0" y="362" font-size="28" fill="#222" stroke="#222" stroke-width="0.5">Count of Records by Name</text><rect x="82" y="431.8" width="1414" height="2" fill="#e3e3e3"/><rect x="82" y="567.0" width="1414" height="2" fill="#e3e3e3"/><rect x="82" y="702.2" width="1414" height="2" fill="#e3e3e3"/><rect x="82" y="837.4" width="1414" height="2" fill="#e3e3e3"/><rect x="82" y="972.6" width="1414" height="2" fill="#e3e3e3"/><text x="65" y="439.8" font-size="20" fill="#222" stroke="#222" stroke-width="0.4" text-anchor="end">500</text><text x="65" y="575.0" font-size="20" fill="#222" stroke="#222" stroke-width="0.4" text-anchor="end">400</text><text x="65" y="710.2" font-size="20" fill="#222" stroke="#222" stroke-width="0.4" text-anchor="end">300</text><text x="65" y="845.4" font-size="20" fill="#222" stroke="#222" stroke-width="0.4" text-anchor="end">200</text><text x="65" y="980.6" font-size="20" fill="#222" stroke="#222" stroke-width="0.4" text-anchor="end">100</text><text x="65" y="1115.8" font-size="20" fill="#222" stroke="#222" stroke-width="0.4" text-anchor="end">0</text><polyline points="82.2,959.0 191.0,1050.6 299.7,1071.7 408.5,1106.5 517.2,1091.7 626.0,851.0 734.7,1092.7 843.5,1090.0 952.2,1106.0 1061.0,518.8 1169.7,536.8 1278.4,793.5 1387.2,1106.5 1495.9,1104.0" fill="none" stroke="#a8d9ed" stroke-width="4.2" stroke-linejoin="miter" stroke-linecap="round"/><rect x="1386" y="433" width="2" height="675" fill="#6e6e6e"/><circle cx="1387" cy="1106" r="6" fill="#b5e6f6"/><rect x="81" y="1107.8" width="1417" height="2.4" fill="#1a1a1a"/><rect x="81.2" y="1098" width="2.2" height="11" fill="#1a1a1a"/><rect x="190.0" y="1098" width="2.2" height="11" fill="#1a1a1a"/><rect x="298.7" y="1098" width="2.2" height="11" fill="#1a1a1a"/><rect x="407.5" y="1098" width="2.2" height="11" fill="#1a1a1a"/><rect x="516.2" y="1098" width="2.2" height="11" fill="#1a1a1a"/><rect x="625.0" y="1098" width="2.2" height="11" fill="#1a1a1a"/><rect x="733.7" y="1098" width="2.2" height="11" fill="#1a1a1a"/><rect x="842.5" y="1098" width="2.2" height="11" fill="#1a1a1a"/><rect x="951.2" y="1098" width="2.2" height="11" fill="#1a1a1a"/><rect x="1060.0" y="1098" width="2.2" height="11" fill="#1a1a1a"/><rect x="1168.7" y="1098" width="2.2" height="11" fill="#1a1a1a"/><rect x="1277.4" y="1098" width="2.2" height="11" fill="#1a1a1a"/><rect x="1386.2" y="1098" width="2.2" height="11" fill="#1a1a1a"/><rect x="1494.9" y="1098" width="2.2" height="11" fill="#1a1a1a"/><defs><clipPath id="lc"><rect x="0" y="1110" width="1600" height="131"/></clipPath></defs><g clip-path="url(#lc)"><text transform="translate(76.2,1118) rotate(-45)" font-size="21" fill="#222" stroke="#222" stroke-width="0.4" text-anchor="end" dominant-baseline="hanging">apple_exercise_time</text><text transform="translate(185.0,1118) rotate(-45)" font-size="21" fill="#222" stroke="#222" stroke-width="0.4" text-anchor="end" dominant-baseline="hanging">apple_stand_time</text><text transform="translate(293.7,1118) rotate(-45)" font-size="21" fill="#222" stroke="#222" stroke-width="0.4" text-anchor="end" dominant-baseline="hanging">cycling_distance</text><text transform="translate(402.5,1118) rotate(-45)" font-size="21" fill="#222" stroke="#222" stroke-width="0.4" text-anchor="end" dominant-baseline="hanging">dietary_water</text><text transform="translate(511.2,1118) rotate(-45)" font-size="21" fill="#222" stroke="#222" stroke-width="0.4" text-anchor="end" dominant-baseline="hanging">environmental_aud...</text><text transform="translate(620.0,1118) rotate(-45)" font-size="21" fill="#222" stroke="#222" stroke-width="0.4" text-anchor="end" dominant-baseline="hanging">flights_climbed</text><text transform="translate(728.7,1118) rotate(-45)" font-size="21" fill="#222" stroke="#222" stroke-width="0.4" text-anchor="end" dominant-baseline="hanging">headphone_audio_e...</text><text transform="translate(837.5,1118) rotate(-45)" font-size="21" fill="#222" stroke="#222" stroke-width="0.4" text-anchor="end" dominant-baseline="hanging">heart_rate_variab...</text><text transform="translate(946.2,1118) rotate(-45)" font-size="21" fill="#222" stroke="#222" stroke-width="0.4" text-anchor="end" dominant-baseline="hanging">protein</text><text transform="translate(1055.0,1118) rotate(-45)" font-size="21" fill="#222" stroke="#222" stroke-width="0.4" text-anchor="end" dominant-baseline="hanging">resting_heart_rate</text><text transform="translate(1163.7,1118) rotate(-45)" font-size="21" fill="#222" stroke="#222" stroke-width="0.4" text-anchor="end" dominant-baseline="hanging">saturated_fat</text><text transform="translate(1272.4,1118) rotate(-45)" font-size="21" fill="#222" stroke="#222" stroke-width="0.4" text-anchor="end" dominant-baseline="hanging">sodium</text><text transform="translate(1381.2,1118) rotate(-45)" font-size="21" fill="#222" stroke="#222" stroke-width="0.4" text-anchor="end" dominant-baseline="hanging">stair_speed_down</text><text transform="translate(1489.9,1118) rotate(-45)" font-size="21" fill="#222" stroke="#222" stroke-width="0.4" text-anchor="end" dominant-baseline="hanging">toothbrushing</text></g><rect x="82" y="1241" width="1414" height="29" fill="#d6e8f5" stroke="#c5d9e8" stroke-width="1"/><rect x="85" y="1241" width="2" height="29" fill="#8c9aa4"/><rect x="82.5" y="1246" width="7" height="20" rx="1.5" fill="#c9d6df" stroke="#7d8a93" stroke-width="1.6"/><rect x="1492" y="1241" width="2" height="29" fill="#8c9aa4"/><rect x="1489.5" y="1246" width="7" height="20" rx="1.5" fill="#c9d6df" stroke="#7d8a93" stroke-width="1.6"/><text x="727" y="1311" font-size="28" fill="#222" stroke="#222" stroke-width="0.9">name</text><path d="M814 1297 L826 1309.5 L838 1297" fill="none" stroke="#777" stroke-width="2.5"/></svg>
<div class="r" style="left:2350.0px;top:314.0px;width:140.0px;height:48.0px;background:#fff;border:2.4px solid #555;border-radius:9px;box-sizing:border-box;box-shadow:0 4px 8px rgba(0,0,0,0.25)"></div>
<svg class="r" style="left:2354px;top:320px;" width="36" height="36" viewBox="0 0 36 36"><g transform=""><g fill="#6e6e6e"><rect x="12.9" y="25" width="5" height="6" rx="1"/><rect x="19.4" y="19.4" width="5.35" height="11.6" rx="1"/><rect x="26.3" y="12.8" width="5" height="18.2" rx="1"/></g><path d="M4.75 25.6 L6.94 19.31 L21.08 5.17 L25.18 9.27 L11.04 23.41 Z M18.61 7.64 L22.71 11.74" fill="none" stroke="#6e6e6e" stroke-width="2.0" stroke-linejoin="round"/></g></svg>
<svg class="r" style="left:2394px;top:320px;" width="36" height="36" viewBox="0 0 36 36"><path d="M20.2 15.6 L29.6 6.4 M22.3 6 H30.2 V14 M15.8 20.2 L6.6 29.4 M5.9 22.2 V30.1 H13.9" fill="none" stroke="#7a7a7a" stroke-width="2.5" stroke-linecap="round" stroke-linejoin="round"/></svg>
<svg class="r" style="left:2448px;top:322px;" width="16" height="34" viewBox="0 0 16 34"><g fill="#222"><circle cx="8" cy="7.4" r="3"/><circle cx="8" cy="17.8" r="3"/><circle cx="8" cy="28.3" r="3"/></g></svg>
<div class="r" style="left:968.0px;top:1656.0px;width:724.0px;height:15.5px;background:#a4a4a4;border-radius:8px"></div>
<div class="r" style="left:2466.0px;top:210.0px;width:474.0px;height:1462.0px;background:#fff"></div>
<div class="r" style="left:2466.0px;top:210.0px;width:2.0px;height:1462.0px;background:#dfdfdf"></div>
<svg class="r" style="left:2494px;top:236px;" width="36" height="36" viewBox="0 0 36 36"><g transform=""><g fill="#5f5f5f"><rect x="12.9" y="25" width="5" height="6" rx="1"/><rect x="19.4" y="19.4" width="5.35" height="11.6" rx="1"/><rect x="26.3" y="12.8" width="5" height="18.2" rx="1"/></g><path d="M4.75 25.6 L6.94 19.31 L21.08 5.17 L25.18 9.27 L11.04 23.41 Z M18.61 7.64 L22.71 11.74" fill="none" stroke="#5f5f5f" stroke-width="2.0" stroke-linejoin="round"/></g></svg>
<div class="t" style="left:2541.0px;top:235.9px;font-size:35.6px;line-height:35.6px;font-weight:400;color:#000000;-webkit-text-stroke:1.1px #000">Properties</div>
<svg class="r" style="left:2883px;top:242.5px;" width="26" height="26" viewBox="0 0 26 26"><path d="M2 2 L24 24.5 M24 2 L2 24.5" stroke="#555" stroke-width="2.5" stroke-linecap="butt"/></svg>
<div class="t b" style="left:2518.0px;top:314.0px;font-size:23.6px;line-height:23.6px;font-weight:700;color:#000000;">Visual</div>
<svg class="r" style="left:2608px;top:308.5px;" width="16" height="36" viewBox="0 0 16 36"><g fill="#555"><circle cx="8" cy="7.4" r="2.7"/><circle cx="8" cy="18" r="2.7"/><circle cx="8" cy="28.6" r="2.7"/></g></svg>
<div class="t" style="left:2686.0px;top:312.7px;font-size:25.1px;line-height:25.1px;font-weight:400;color:#16191f;">Interactions</div>
<div class="r" style="left:2468.0px;top:355.3px;width:472.0px;height:2.5px;background:#a6a6a6"></div>
<div class="r" style="left:2468.0px;top:353.0px;width:168.0px;height:4.5px;background:#111"></div>
<svg class="r" style="left:2496px;top:379px;" width="24" height="32" viewBox="0 0 24 32"><path d="M5.4 3.4 L17.6 15.6 L5.4 27.8" fill="none" stroke="#555" stroke-width="2.5"/></svg>
<div class="t" style="left:2541.0px;top:380.2px;font-size:24.6px;line-height:24.6px;font-weight:400;color:#16191f;">Display Settings</div>
<div class="r" style="left:2468.0px;top:425.6px;width:472.0px;height:2.0px;background:#dedede"></div>
<svg class="r" style="left:2496px;top:449px;" width="24" height="32" viewBox="0 0 24 32"><path d="M5.4 3.4 L17.6 15.6 L5.4 27.8" fill="none" stroke="#555" stroke-width="2.5"/></svg>
<div class="t" style="left:2541.0px;top:450.2px;font-size:24.6px;line-height:24.6px;font-weight:400;color:#16191f;">Data series</div>
<div class="r" style="left:2468.0px;top:495.7px;width:472.0px;height:2.0px;background:#dedede"></div>
<svg class="r" style="left:2496px;top:519px;" width="24" height="32" viewBox="0 0 24 32"><path d="M5.4 3.4 L17.6 15.6 L5.4 27.8" fill="none" stroke="#555" stroke-width="2.5"/></svg>
<div class="t" style="left:2541.0px;top:520.2px;font-size:24.6px;line-height:24.6px;font-weight:400;color:#16191f;">X-axis</div>
<div class="r" style="left:2468.0px;top:565.8px;width:472.0px;height:2.0px;background:#dedede"></div>
<svg class="r" style="left:2496px;top:589px;" width="24" height="32" viewBox="0 0 24 32"><path d="M5.4 3.4 L17.6 15.6 L5.4 27.8" fill="none" stroke="#555" stroke-width="2.5"/></svg>
<div class="t" style="left:2541.0px;top:590.2px;font-size:24.6px;line-height:24.6px;font-weight:400;color:#16191f;">Y-axis</div>
<div class="r" style="left:2468.0px;top:635.8px;width:472.0px;height:2.0px;background:#dedede"></div>
<svg class="r" style="left:2496px;top:659px;" width="24" height="32" viewBox="0 0 24 32"><path d="M5.4 3.4 L17.6 15.6 L5.4 27.8" fill="none" stroke="#555" stroke-width="2.5"/></svg>
<div class="t" style="left:2541.0px;top:660.2px;font-size:24.6px;line-height:24.6px;font-weight:400;color:#16191f;">Reference lines</div>
<div class="r" style="left:2468.0px;top:706.0px;width:472.0px;height:2.0px;background:#dedede"></div>
<svg class="r" style="left:2496px;top:730px;" width="24" height="32" viewBox="0 0 24 32"><path d="M5.4 3.4 L17.6 15.6 L5.4 27.8" fill="none" stroke="#555" stroke-width="2.5"/></svg>
<div class="t" style="left:2541.0px;top:731.7px;font-size:24.6px;line-height:24.6px;font-weight:400;color:#16191f;">Data labels</div>
<div class="r" style="left:2468.0px;top:780.0px;width:472.0px;height:2.0px;background:#dedede"></div>
<div class="r" style="left:2860.5px;top:731.6px;width:54.8px;height:30.9px;border:2.2px solid #555;border-radius:16px;box-sizing:border-box;background:#fff"></div>
<div class="r" style="left:2864.3px;top:735.2px;width:23.8px;height:23.8px;border-radius:50%;background:#555"></div>
<div class="r" style="left:2338.0px;top:634.0px;width:253.0px;height:104.0px;background:#fff;border-radius:9px;box-shadow:0 2px 6px rgba(0,0,0,0.28)"></div>
<div class="t" style="left:2374.0px;top:653.3px;font-size:24.5px;line-height:24.5px;font-weight:400;color:#16191f;">stair_speed_down</div>
<div class="r" style="left:2354px;top:699.6px;width:12px;height:12px;border-radius:50%;background:#a8d9ed"></div>
<div class="t" style="left:2374.0px;top:693.3px;font-size:24.5px;line-height:24.5px;font-weight:400;color:#555555;">Count</div>
<div class="t" style="right:374.0px;top:693.3px;font-size:24.5px;line-height:24.5px;font-weight:400;color:#16191f;">1</div>
</body></html>
